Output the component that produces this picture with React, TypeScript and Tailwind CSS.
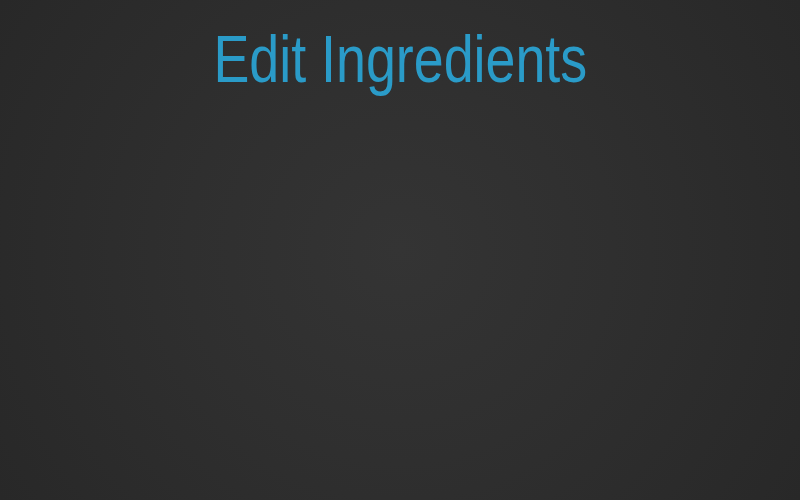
export default function App() {
  return (
    <div className="w-[800px] h-[500px] bg-[radial-gradient(circle_at_center,#343434_0%,#2f2f2f_45%,#282828_100%)] flex flex-col items-center">
      <h1 className="mt-[22px] text-[66px] leading-[74px] scale-x-[0.815] whitespace-nowrap text-[#2a9bc8] font-['Liberation_Sans',Arial,sans-serif]">
        Edit Ingredients
      </h1>
    </div>
  );
}
